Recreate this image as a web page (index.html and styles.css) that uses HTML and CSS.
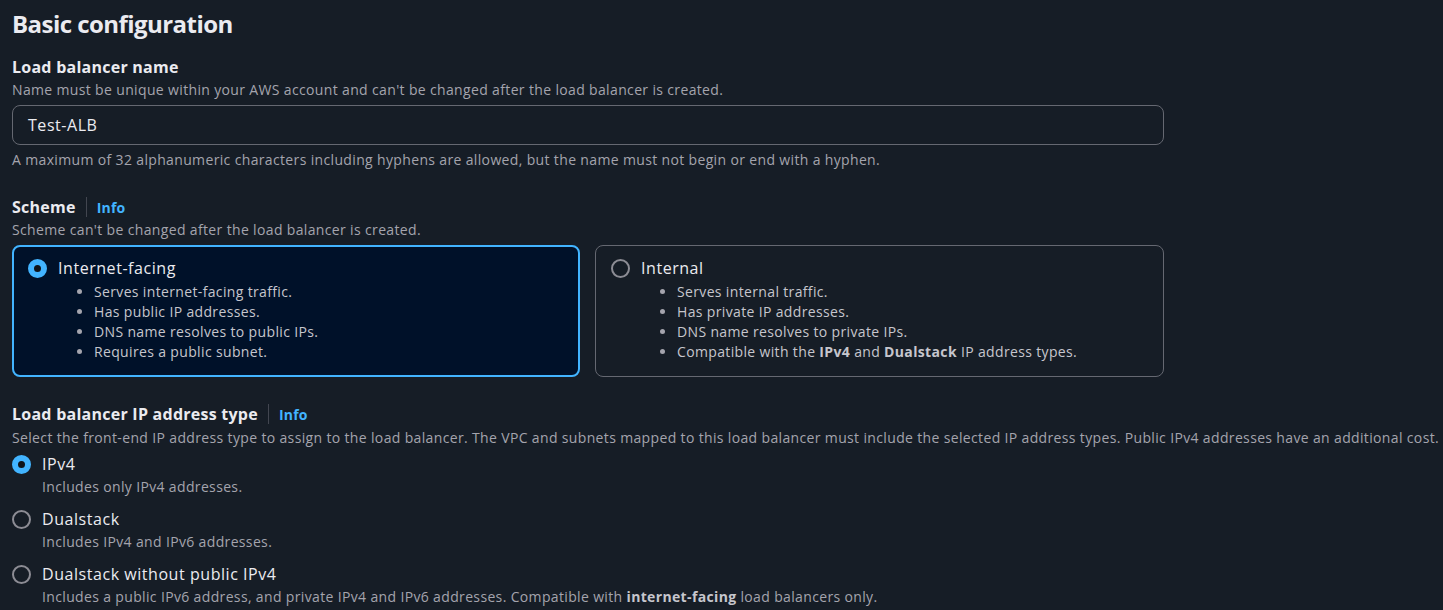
FILE: index.html
```html
<!DOCTYPE html>
<html lang="en">
<head>
<meta charset="utf-8">
<title>Basic configuration</title>
<link rel="stylesheet" href="styles.css">
</head>
<body>
<main class="page">
  <h2 class="title">Basic configuration</h2>

  <section class="field">
    <div class="label">Load balancer name</div>
    <div class="desc">Name must be unique within your AWS account and can't be changed after the load balancer is created.</div>
    <div class="input">Test-ALB</div>
    <div class="desc constraint">A maximum of 32 alphanumeric characters including hyphens are allowed, but the name must not begin or end with a hyphen.</div>
  </section>

  <section class="field scheme">
    <div class="label-row"><span class="label">Scheme</span><span class="sep"></span><span class="info">Info</span></div>
    <div class="desc">Scheme can't be changed after the load balancer is created.</div>
    <div class="tiles">
      <div class="tile selected">
        <div class="tile-head"><span class="radio on"></span><span class="tile-title">Internet-facing</span></div>
        <ul class="bullets">
          <li>Serves internet-facing traffic.</li>
          <li>Has public IP addresses.</li>
          <li>DNS name resolves to public IPs.</li>
          <li>Requires a public subnet.</li>
        </ul>
      </div>
      <div class="tile">
        <div class="tile-head"><span class="radio"></span><span class="tile-title">Internal</span></div>
        <ul class="bullets">
          <li>Serves internal traffic.</li>
          <li>Has private IP addresses.</li>
          <li>DNS name resolves to private IPs.</li>
          <li>Compatible with the <b>IPv4</b> and <b>Dualstack</b> IP address types.</li>
        </ul>
      </div>
    </div>
  </section>

  <section class="field iptype">
    <div class="label-row"><span class="label">Load balancer IP address type</span><span class="sep"></span><span class="info">Info</span></div>
    <div class="desc wide">Select the front-end IP address type to assign to the load balancer. The VPC and subnets mapped to this load balancer must include the selected IP address types. Public IPv4 addresses have an additional cost.</div>
    <div class="options">
      <div class="option">
        <span class="radio on"></span>
        <div class="opt-text">
          <div class="opt-title">IPv4</div>
          <div class="desc">Includes only IPv4 addresses.</div>
        </div>
      </div>
      <div class="option">
        <span class="radio"></span>
        <div class="opt-text">
          <div class="opt-title">Dualstack</div>
          <div class="desc">Includes IPv4 and IPv6 addresses.</div>
        </div>
      </div>
      <div class="option">
        <span class="radio"></span>
        <div class="opt-text">
          <div class="opt-title">Dualstack without public IPv4</div>
          <div class="desc">Includes a public IPv6 address, and private IPv4 and IPv6 addresses. Compatible with <b>internet-facing</b> load balancers only.</div>
        </div>
      </div>
    </div>
  </section>
</main>
</body>
</html>
```

FILE: styles.css
```css
* { box-sizing: border-box; }
html, body { margin: 0; padding: 0; }
body {
  background: #161d26;
  font-family: "Open Sans", "Noto Sans", sans-serif;
  color: #c6c6cd;
  overflow: hidden;
}
.page {
  padding: 8px 12px 0 12px;
  width: 1443px;
}
.title {
  margin: 0;
  font-size: 24px;
  line-height: 32px;
  font-weight: 700;
  letter-spacing: -0.55px;
  color: #ebebf0;
}
.field { width: 1152px; }
.label {
  font-size: 16px;
  line-height: 20px;
  font-weight: 700;
  letter-spacing: 0.25px;
  color: #ebebf0;
}
.field > .label { margin-top: 17px; }
.desc {
  font-size: 14px;
  line-height: 20px;
  letter-spacing: 0.35px;
  color: #a4a4ad;
}
.field > .label + .desc { margin-top: 3px; }
.label-row + .desc { margin-top: 2px; }
.iptype .label-row + .desc { margin-top: 3px; }
.desc b { font-weight: 700; color: #c6c6cd; }
.desc.wide { white-space: nowrap; }
.input {
  margin-top: 5px;
  height: 40px;
  border: 1px solid #656871;
  border-radius: 8px;
  padding: 0 15px;
  display: flex;
  align-items: center;
  font-size: 16px;
  letter-spacing: 0.55px;
  color: #ebebf0;
}
.constraint { margin-top: 5px; }
.label-row {
  display: flex;
  align-items: center;
  height: 22px;
}
.sep {
  width: 1px;
  height: 20px;
  background: #424650;
  margin: 0 10px;
}
.info {
  font-size: 14px;
  font-weight: 700;
  letter-spacing: 0.2px;
  color: #42b4ff;
}
.scheme { margin-top: 26px; }
.tiles {
  margin-top: 5px;
  display: grid;
  grid-template-columns: 568px 569px;
  gap: 15px;
}
.tile {
  border: 1px solid #656871;
  border-radius: 8px;
  padding: 10px 15px 14px 15px;
  min-height: 131px;
}
.tile.selected {
  border: 2px solid #42b4ff;
  background: #001129;
  padding: 9px 14px 13px 14px;
}
.tile-head {
  display: flex;
  align-items: center;
  height: 24px;
}
.radio {
  flex: none;
  width: 19px;
  height: 19px;
  border-radius: 50%;
  border: 2px solid #8c8c94;
  display: inline-block;
}
.radio.on {
  border: 6px solid #42b4ff;
  background: #0f141a;
}
.tile-title {
  margin-left: 11px;
  font-size: 16px;
  letter-spacing: 0.55px;
  color: #ebebf0;
}
.bullets {
  margin: 2px 0 0 0;
  padding-left: 66px;
  font-size: 14px;
  line-height: 20px;
  letter-spacing: 0.35px;
  color: #c6c6cd;
}
.bullets li::marker { color: #a4a4ad; }
.bullets b { font-weight: 700; }
.iptype { margin-top: 26px; }
.options {
  margin-top: 5px;
  display: flex;
  flex-direction: column;
  gap: 10px;
}
.option {
  display: flex;
  align-items: flex-start;
}
.option .radio { margin-top: 2px; }
.opt-text { margin-left: 11px; }
.opt-title {
  font-size: 16px;
  line-height: 22px;
  letter-spacing: 0.55px;
  color: #ebebf0;
}
.opt-text .desc { white-space: nowrap; margin-top: 2px; }
.option + .option { margin-top: 1px; }
```
